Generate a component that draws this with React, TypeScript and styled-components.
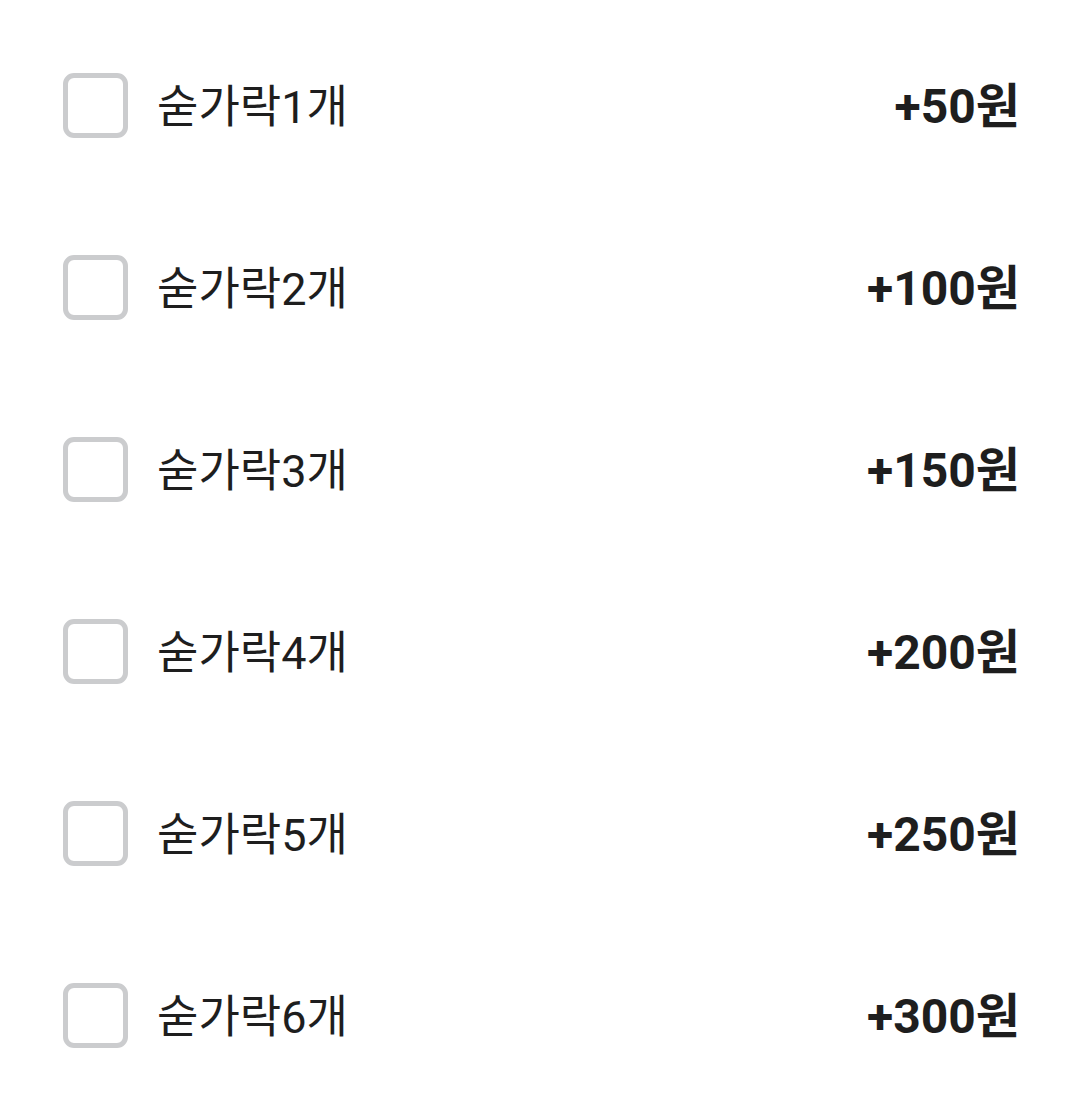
import React, { useState } from 'react';
import styled, { createGlobalStyle } from 'styled-components';

const Global = createGlobalStyle`
  html, body {
    margin: 0;
    padding: 0;
    background: #ffffff;
  }
  body {
    font-family: Roboto, "Noto Sans CJK KR", sans-serif;
    color: #1e1e1e;
  }
`;

const List = styled.ul`
  list-style: none;
  margin: 0;
  padding: 14px 60px 0 63px;
`;

const Row = styled.li`
  height: 182px;
  display: flex;
  align-items: center;
`;

const Box = styled.button<{ $checked: boolean }>`
  width: 65px;
  height: 65px;
  flex: 0 0 65px;
  box-sizing: border-box;
  border: 5px solid ${({ $checked }) => ($checked ? '#1e1e1e' : '#cbccce')};
  border-radius: 11px;
  background: ${({ $checked }) => ($checked ? '#1e1e1e' : '#ffffff')};
  padding: 0;
  cursor: pointer;
`;

const Label = styled.span`
  margin-left: 29px;
  padding-bottom: 4px;
  font-size: 45px;
  font-weight: 400;
  flex: 1;
`;

const Price = styled.span`
  padding-bottom: 6px;
  font-size: 48px;
  font-weight: 700;
`;

const options = [
  { name: '숟가락1개', price: 50 },
  { name: '숟가락2개', price: 100 },
  { name: '숟가락3개', price: 150 },
  { name: '숟가락4개', price: 200 },
  { name: '숟가락5개', price: 250 },
  { name: '숟가락6개', price: 300 },
];

const App = () => {
  const [checked, setChecked] = useState<number[]>([]);
  const toggle = (i: number) =>
    setChecked((prev) => (prev.includes(i) ? prev.filter((v) => v !== i) : [...prev, i]));

  return (
    <>
      <Global />
      <List>
        {options.map((o, i) => (
          <Row key={o.name}>
            <Box type="button" $checked={checked.includes(i)} onClick={() => toggle(i)} />
            <Label>{o.name}</Label>
            <Price>+{o.price}원</Price>
          </Row>
        ))}
      </List>
    </>
  );
};

export default App;
